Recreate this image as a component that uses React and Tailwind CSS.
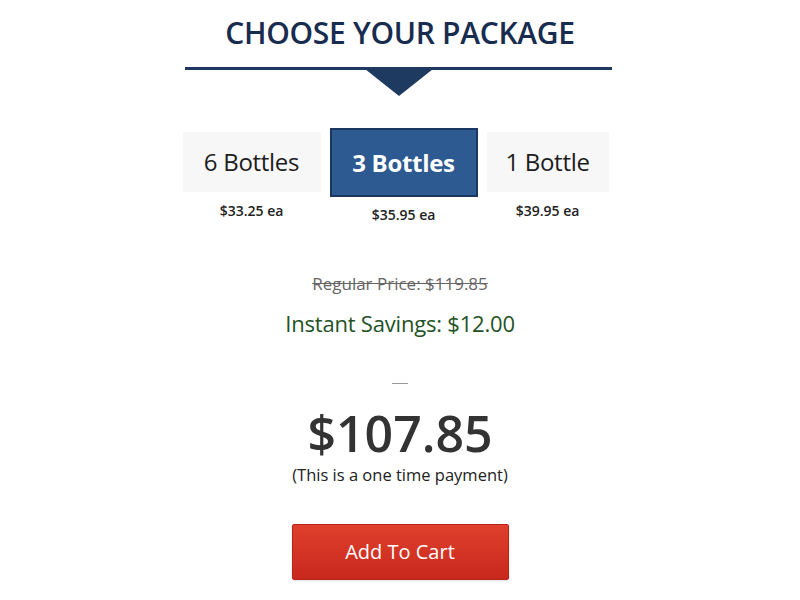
export default function App() {
  const packages = [
    { label: "6 Bottles", price: "$33.25 ea", active: false, w: "w-[138px]" },
    { label: "3 Bottles", price: "$35.95 ea", active: true, w: "w-[148px]" },
    { label: "1 Bottle", price: "$39.95 ea", active: false, w: "w-[122px]" },
  ];

  return (
    <div className="min-h-screen bg-white flex flex-col items-center" style={{ fontFamily: '"Open Sans", sans-serif' }}>
      {/* Heading */}
      <h1 className="mt-[13px] text-[30px] leading-[40px] font-semibold text-[#182c4f] tracking-[-0.3px]">
        CHOOSE YOUR PACKAGE
      </h1>

      {/* Divider with arrow */}
      <div className="mt-[14px] ml-[-3px] w-[427px] flex flex-col items-center">
        <div className="w-full h-[3px] bg-[#1e3a60]" />
        <svg width="68" height="27" viewBox="0 0 68 27" className="-mt-px">
          <polygon points="0,0 68,0 34,27" fill="#1e3a60" />
        </svg>
      </div>

      {/* Package options */}
      <div className="mt-[32px] ml-[-9px] flex items-start gap-[9px]">
        {packages.map((p) => (
          <div key={p.label} className="flex flex-col items-center">
            {p.active ? (
              <div className={`${p.w} h-[69px] bg-[#2d5a90] border-2 border-[#193760] flex items-center justify-center text-white text-[24px] font-bold tracking-[-0.3px]`}>
                {p.label}
              </div>
            ) : (
              <div className={`${p.w} mt-[4px] h-[60px] bg-[#f7f7f7] flex items-center justify-center text-[#1c1c1c] text-[24px] font-medium tracking-[-0.3px]`}>
                {p.label}
              </div>
            )}
            <div className={`${p.active ? "mt-[7px]" : "mt-[8px]"} text-[14px] font-semibold text-[#222]`}>
              {p.price}
            </div>
          </div>
        ))}
      </div>

      {/* Pricing */}
      <div className="mt-[46px] text-[17px] text-[#666] line-through">Regular Price: $119.85</div>
      <div className="mt-[10px] text-[22px] font-medium text-[#1f5226] tracking-[-0.2px]">Instant Savings: $12.00</div>

      <div className="mt-[43px] w-[16px] h-px bg-[#999]" />

      <div className="mt-[23px] text-[50px] leading-[52px] font-semibold text-[#333]">$107.85</div>
      <div className="mt-[5px] text-[16.5px] leading-[22px] text-[#222]">(This is a one time payment)</div>

      <button className="mt-[38px] w-[217px] h-[56px] rounded-[2px] bg-gradient-to-b from-[#df3f2c] to-[#c8281d] border border-[#b82418] text-white text-[20px] shadow-sm">
        Add To Cart
      </button>
    </div>
  );
}
